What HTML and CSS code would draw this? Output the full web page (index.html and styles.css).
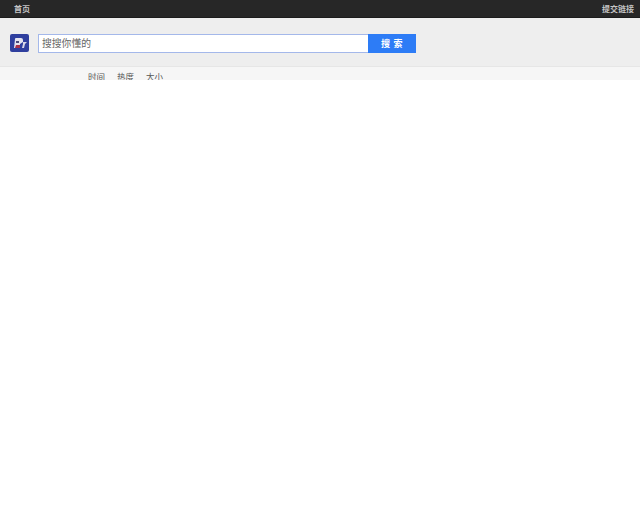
FILE: index.html
```html
<!DOCTYPE html>
<html lang="zh">
<head>
<meta charset="UTF-8">
<meta name="viewport" content="width=device-width, initial-scale=1.0">
<title>搜索</title>
<link rel="stylesheet" href="styles.css">
</head>
<body>
<div class="topbar">
<a href="#">首页</a>
<a href="#">提交链接</a>
</div>

<div class="search">
<a class="logo" href="#">
<svg width="19" height="18" viewBox="0 0 19 18">
<rect width="19" height="18" rx="2" fill="#2f3f9e"/>
<path d="M4 14 L5 5 Q5 4 6 4 H11 Q13 4 13 6 V8 L10 10 V14 Z" fill="#e4e4f0"/>
<path d="M6 7 H9 V9 H6 Z" fill="#4a4a7a"/>
<path d="M5 14 L6 11 H10 V14 Z" fill="#a8324a"/>
<path d="M13 8 H17 L15 10 L14 14 H12 L13 10 Z" fill="#d8d8e8"/>
</svg>
</a>
<form class="search-form">
<input class="search-input" type="text" placeholder="搜搜你懂的">
<button class="search-btn" type="button">搜 索</button>
</form>
</div>

<div class="tabs">
<a href="#">时间</a>
<a href="#">热度</a>
<a href="#">大小</a>
</div>
</body>
</html>
```

FILE: styles.css
```css
html, body {
  margin: 0;
  padding: 0;
  background: #fff;
  font-family: "Liberation Sans", "Noto Sans CJK SC", sans-serif;
}

a {
  text-decoration: none;
}

.topbar {
  display: flex;
  justify-content: space-between;
  height: 18px;
  padding: 0 6px 0 14px;
  background: #272727;
  border-bottom: 1px solid #1c1c1c;
  box-sizing: border-box;
  font-size: 8px;
  font-weight: bold;
  line-height: 19px;
}

.topbar a {
  color: #c4c4c4;
}

.search {
  display: flex;
  align-items: flex-start;
  gap: 9px;
  height: 49px;
  padding: 16px 0 0 10px;
  background: #eeeeee;
  border-bottom: 1px solid #e6e6e6;
  box-sizing: border-box;
}

.logo {
  display: block;
  height: 18px;
}

.search-form {
  display: flex;
  margin: 0;
}

.search-input {
  width: 330px;
  height: 19px;
  padding: 0 3px;
  background: #fff;
  border: 1px solid #a4b8ea;
  border-right: 0;
  border-radius: 0;
  box-sizing: border-box;
  font-family: inherit;
  font-size: 9.8px;
  outline: none;
}

.search-input::placeholder {
  color: #666;
  opacity: 1;
}

.search-btn {
  width: 48px;
  height: 19px;
  padding: 0;
  background: #2d7cf6;
  border: 0;
  color: #fff;
  font-family: inherit;
  font-size: 9px;
  font-weight: bold;
  letter-spacing: 0.5px;
}

.tabs {
  display: flex;
  gap: 12px;
  height: 13px;
  padding-left: 88px;
  background: #f6f6f6;
  font-size: 8.5px;
  line-height: 21px;
  overflow: hidden;
}

.tabs a {
  color: #555;
}
```
